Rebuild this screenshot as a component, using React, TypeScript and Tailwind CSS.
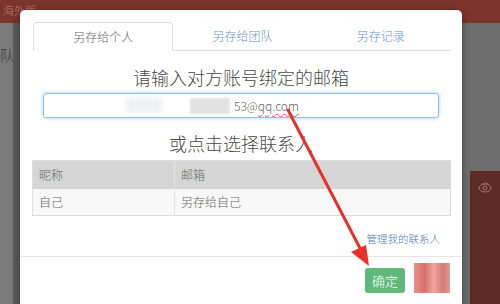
import React from "react";

export default function App() {
  const font = { fontFamily: '"Noto Sans CJK SC", "Noto Sans", sans-serif' };
  return (
    <div className="relative w-[500px] h-[304px] overflow-hidden bg-[#6e6e6e] font-light" style={font}>
      {/* background page */}
      <div className="h-[23px] bg-[#7c352c] text-[11px] leading-[20px] text-[#b47a70] pl-[3px]">海外版</div>
      <div className="absolute left-0 top-[23px] w-[13px] h-[281px] bg-[#7a7a7a]" />
      <div className="absolute left-[13px] top-[23px] w-[7px] h-[281px] bg-[#5c5c5c]" />
      <div className="absolute left-[0px] top-[44px] text-[15px] text-[#3a3a3a]">队</div>
      <div className="absolute left-[470px] top-[171px] w-[30px] h-[133px] bg-[#5d2a26] flex justify-center pt-[10px]">
        <svg width="14" height="12" viewBox="0 0 14 12" fill="none" stroke="#a07a76" strokeWidth="1">
          <ellipse cx="7" cy="7" rx="6" ry="4" />
          <circle cx="7" cy="7" r="2" />
          <path d="M4 2l1 1M7 1v1.5M10 2l-1 1" />
        </svg>
      </div>

      {/* modal */}
      <div className="absolute left-[20px] top-[10px] w-[442px] h-[300px] bg-white rounded-[5px] shadow-[0_3px_9px_rgba(0,0,0,0.4)] flex flex-col">
        <div className="mt-[12px] ml-[13px] mr-[12px] flex h-[29px] border-b border-[#dddddd]">
          <div className="flex-1 -mb-px border border-[#dddddd] border-b-white rounded-t-[4px] bg-white flex items-center justify-center text-[12px] text-[#666666]">
            另存给个人
          </div>
          <div className="flex-1 flex items-center justify-center text-[12px] text-[#6a93c4]">另存给团队</div>
          <div className="flex-1 flex items-center justify-center text-[12px] text-[#6a93c4]">另存记录</div>
        </div>

        <div className="mt-[13px] text-center text-[18px] leading-[26px] text-[#4a4a4a]">请输入对方账号绑定的邮箱</div>

        <div className="mt-[3px] mx-[23px] h-[25px] rounded-[3px] border border-[#8fc1ea] shadow-[0_0_4px_rgba(102,175,233,0.6)] flex items-center relative">
          <div className="absolute left-[82px] top-[4px] w-[36px] h-[15px] bg-[#eef1f4] blur-[2px]" />
          <div className="absolute left-[146px] top-[4px] w-[40px] h-[16px] bg-[#e2e2e2] blur-[1px]" />
          <span className="absolute left-[190px] text-[12px] text-[#666666] leading-[16px]">
            53@
            <span className="underline decoration-wavy decoration-[#e05050] decoration-1 underline-offset-2">qq.com</span>
          </span>
        </div>

        <div className="mt-[12px] text-center text-[18px] leading-[26px] text-[#4a4a4a]">或点击选择联系人</div>

        <div className="mt-[4px] ml-[12px] mr-[11px] border border-[#dddddd] text-[12px] text-[#666666]">
          <div className="flex h-[28px] bg-[#d5d5d5]">
            <div className="w-[142px] border-r border-[#e4e4e4] flex items-center pl-[6px]">昵称</div>
            <div className="flex-1 flex items-center pl-[6px]">邮箱</div>
          </div>
          <div className="flex h-[26px] bg-[#f8f8f8]">
            <div className="w-[142px] border-r border-[#e4e4e4] flex items-center pl-[6px]">自己</div>
            <div className="flex-1 flex items-center pl-[6px]">另存给自己</div>
          </div>
        </div>

        <div className="mt-[15px] mr-[22px] flex justify-end text-[10.5px] leading-[16px] text-[#4a7ab5]">管理我的联系人</div>

        <div className="mt-[9px] border-t border-[#e5e5e5] flex justify-end items-start pr-[12px]">
          <div className="mt-[11px] w-[40px] h-[25px] rounded-[3px] bg-[#5fb97b] text-white text-[13px] flex items-center justify-center">
            确定
          </div>
          <div className="ml-[9px] mt-[6px] w-[36px] h-[30px] bg-[linear-gradient(90deg,#e8908c,#d9706c_30%,#f0a6a0_55%,#d67c76_80%,#e29a94)] blur-[0.5px]" />
        </div>
      </div>

      {/* annotation arrow */}
      <svg className="absolute left-0 top-0 pointer-events-none" width="500" height="304" viewBox="0 0 500 304">
        <line x1="288" y1="110" x2="362" y2="252" stroke="#e8302a" strokeWidth="3" strokeLinecap="round" />
        <polygon points="369,266 351,252 366,245" fill="#e8302a" />
      </svg>
    </div>
  );
}
